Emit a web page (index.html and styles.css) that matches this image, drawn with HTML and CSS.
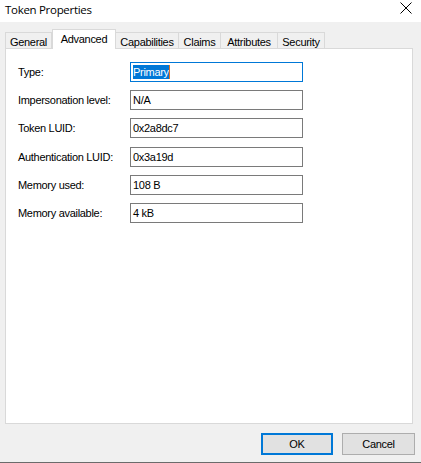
FILE: index.html
```html
<!DOCTYPE html>
<html>
<head>
<meta charset="utf-8">
<link rel="stylesheet" href="styles.css">
</head>
<body>
<div class="window">
  <div class="titlebar">
    <span class="title">Token Properties</span>
    <svg class="close" width="12" height="12" viewBox="0 0 12 12"><path d="M0.5 0.5 L11.5 11.5 M11.5 0.5 L0.5 11.5" stroke="#000" stroke-width="1" fill="none"/></svg>
  </div>
  <div class="body">
    <div class="tabs">
      <div class="tab t1">General</div>
      <div class="tab t2 active">Advanced</div>
      <div class="tab t3">Capabilities</div>
      <div class="tab t4">Claims</div>
      <div class="tab t5">Attributes</div>
      <div class="tab t6">Security</div>
    </div>
    <div class="panel">
      <div class="row"><span class="label">Type:</span><div class="field focused"><span class="sel">Primary</span><span class="caret"></span></div></div>
      <div class="row"><span class="label">Impersonation level:</span><div class="field">N/A</div></div>
      <div class="row"><span class="label">Token LUID:</span><div class="field">0x2a8dc7</div></div>
      <div class="row"><span class="label">Authentication LUID:</span><div class="field">0x3a19d</div></div>
      <div class="row"><span class="label">Memory used:</span><div class="field">108 B</div></div>
      <div class="row"><span class="label">Memory available:</span><div class="field">4 kB</div></div>
    </div>
    <div class="buttons">
      <div class="btn default">OK</div>
      <div class="btn">Cancel</div>
    </div>
  </div>
</div>
</body>
</html>
```

FILE: styles.css
```css
html, body {
  margin: 0;
  padding: 0;
  background: #f0f0f0;
}
.window {
  width: 421px;
  height: 463px;
  display: flex;
  flex-direction: column;
  font-family: "Liberation Sans", Arial, sans-serif;
  font-size: 11px;
  letter-spacing: -0.3px;
  color: #000;
  box-sizing: border-box;
  border-bottom: 1px solid #6b6b6b;
}
.titlebar {
  height: 22px;
  background: #fff;
  display: flex;
  align-items: center;
  justify-content: space-between;
  padding: 0 10px 0 5px;
  flex: none;
}
.title {
  font-family: "Open Sans", "Liberation Sans", sans-serif;
  font-size: 11.5px;
  letter-spacing: -0.3px;
  position: relative;
  top: -2px;
}
.close {
  position: relative;
  top: -3px;
  left: 1px;
}
.body {
  flex: 1;
  display: flex;
  flex-direction: column;
  padding: 7px 0 0 5px;
}
.tabs {
  display: flex;
  align-items: flex-end;
  height: 19px;
  position: relative;
  z-index: 1;
}
.tab {
  height: 16px;
  box-sizing: border-box;
  border: 1px solid #d9d9d9;
  border-bottom: none;
  border-left: none;
  background: #f0f0f0;
  display: flex;
  align-items: center;
  justify-content: center;
  padding-top: 2px;
  white-space: nowrap;
}
.tab.t1 { width: 47px; border-left: 1px solid #d9d9d9; }
.tab.t2 { width: 64px; }
.tab.t3 { width: 63px; border-left: none; }
.tab.t4 { width: 42px; }
.tab.t5 { width: 57px; }
.tab.t6 { width: 47px; }
.tab.active {
  height: 20px;
  background: #fff;
  border: 1px solid #d9d9d9;
  border-bottom: none;
  margin-bottom: -1px;
  padding-top: 0;
  padding-bottom: 2px;
}
.panel {
  width: 408px;
  height: 376px;
  box-sizing: border-box;
  background: #fff;
  border: 1px solid #d9d9d9;
  padding: 13px 0 0 12px;
  display: flex;
  flex-direction: column;
  gap: 8.2px;
}
.row {
  display: flex;
  align-items: center;
  height: 20px;
}
.label {
  width: 112px;
  flex: none;
}
.field {
  width: 173px;
  height: 20px;
  box-sizing: border-box;
  border: 1px solid #7a7a7a;
  padding: 0 2px;
  display: flex;
  align-items: center;
}
.field.focused {
  border-color: #0078d7;
}
.sel {
  background: #0078d7;
  color: #fff;
  line-height: 14px;
}
.caret {
  width: 1px;
  height: 14px;
  background: #e07020;
}
.buttons {
  display: flex;
  justify-content: flex-end;
  gap: 9px;
  padding: 9px 6px 0 0;
}
.btn {
  width: 73px;
  height: 22px;
  box-sizing: border-box;
  border: 1px solid #adadad;
  background: #e1e1e1;
  display: flex;
  align-items: center;
  justify-content: center;
}
.btn.default {
  width: 72px;
  border: 2px solid #0078d7;
}
```
